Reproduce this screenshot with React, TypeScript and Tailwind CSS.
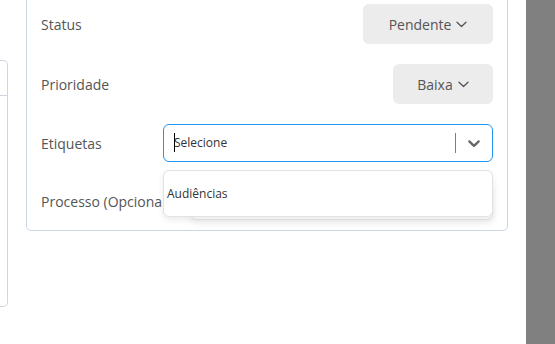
import React from "react";

function Chevron() {
  return (
    <svg width="11" height="7" viewBox="0 0 11 7" fill="none">
      <path d="M1 1.2L5.5 5.5L10 1.2" stroke="#555" strokeWidth="1.3" strokeLinecap="round" strokeLinejoin="round" />
    </svg>
  );
}

function SelectChevron() {
  return (
    <svg width="20" height="20" viewBox="0 0 20 20" fill="#666">
      <path d="M4.516 7.548c0.436-0.446 1.043-0.481 1.576 0l3.908 3.747 3.908-3.747c0.533-0.481 1.141-0.446 1.574 0 0.436 0.445 0.408 1.197 0 1.615-0.406 0.418-4.695 4.502-4.695 4.502-0.217 0.223-0.502 0.335-0.787 0.335s-0.57-0.112-0.789-0.335c0 0-4.287-4.084-4.695-4.502s-0.436-1.17 0-1.615z" />
    </svg>
  );
}

export default function App() {
  return (
    <div
      className="w-[555px] h-[344px] bg-white overflow-hidden flex text-[#555]"
      style={{ fontFamily: '"Open Sans", "Noto Sans", sans-serif' }}
    >
      {/* left partial panel */}
      <div className="w-[8px] mt-[60px] h-[247px] border-t border-r border-b border-[#cdd7e2] rounded-r-[5px] shrink-0">
        <div className="h-[35px] border-b border-[#cdd7e2]" />
      </div>

      {/* main card */}
      <div className="ml-[18px] w-[482px] -mt-[20px] h-[251px] shrink-0 border border-[#cdd7e2] rounded-[5px] pt-[23px] pl-[14px] pr-[14px] flex flex-col gap-[20px]">
        <div className="h-[40px] flex items-center justify-between">
          <span className="text-[14px]">Status</span>
          <button className="w-[130px] h-[40px] rounded-[6px] bg-[#ececec] flex items-center justify-center gap-[5px] text-[14px] text-[#555]">
            <span>Pendente</span>
            <Chevron />
          </button>
        </div>
        <div className="h-[40px] flex items-center justify-between">
          <span className="text-[14px]">Prioridade</span>
          <button className="w-[100px] h-[40px] rounded-[6px] bg-[#ececec] flex items-center justify-center gap-[5px] text-[14px] text-[#555]">
            <span>Baixa</span>
            <Chevron />
          </button>
        </div>
        <div className="h-[38px] flex items-center justify-between relative z-10">
          <span className="text-[14px]">Etiquetas</span>
          <div className="relative w-[330px] h-[38px]">
            <div className="h-[38px] border border-[#2196f3] rounded-[6px] flex items-center bg-white">
              <div className="flex-1 flex items-center pl-[10px] text-[12px] text-[#333]">
                <span className="relative">
                  <span className="absolute left-0 -top-[1px] w-[1px] h-[19px] bg-black" />
                  Selecione
                </span>
              </div>
              <div className="w-[1px] h-[20px] bg-[#2196f3]" />
              <div className="px-[8px] flex items-center">
                <SelectChevron />
              </div>
            </div>
            <div className="absolute left-0 top-[46px] w-[330px] h-[47px] bg-white border border-[#e2e2e2] rounded-[6px] shadow-[0_3px_6px_rgba(0,0,0,0.08)] flex items-center pl-[3px] text-[12px] text-[#333]">
              Audiências
            </div>
          </div>
        </div>
        <div className="h-[38px] flex items-center justify-between">
          <span className="text-[14px] whitespace-nowrap">Processo (Opcional)</span>
          <div className="w-[303px] h-[38px] border border-[#e6e6e6] rounded-[6px] bg-white shadow-[0_3px_8px_rgba(0,0,0,0.07)]" />
        </div>
      </div>

      <div className="flex-1" />
      <div className="w-[29px] h-full bg-[#808080] shrink-0" />
    </div>
  );
}
